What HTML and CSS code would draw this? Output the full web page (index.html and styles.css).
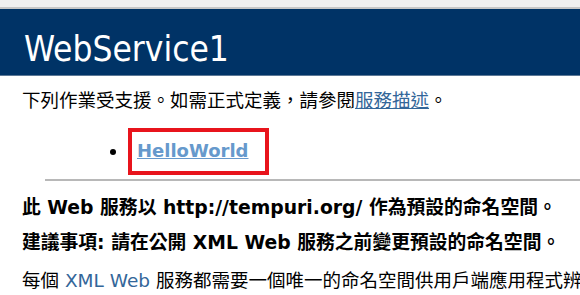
FILE: index.html
```html
<!DOCTYPE html>
<html>
<head>
<meta charset="utf-8">
<title>WebService1</title>
<link rel="stylesheet" href="styles.css">
</head>
<body>
<div class="topstrip"></div>
<div class="banner"><h1 class="title">WebService1</h1></div>
<div class="content">
  <p class="intro">下列作業受支援。如需正式定義，請參閱<a class="link" href="#">服務描述</a>。</p>
  <ul class="ops">
    <li><span class="mark"><a class="op" href="#">HelloWorld</a></span></li>
  </ul>
  <div class="rule"></div>
  <p class="strong">此 Web 服務以 http://tempuri.org/ 作為預設的命名空間。</p>
  <p class="strong">建議事項: 請在公開 XML Web 服務之前變更預設的命名空間。</p>
  <p class="plain">每個 <span class="blue">XML Web</span> 服務都需要一個唯一的命名空間供用戶端應用程式辨識</p>
</div>
</body>
</html>
```

FILE: styles.css
```css
html, body {
  margin: 0;
  padding: 0;
  background: #ffffff;
  overflow: hidden;
}
body {
  font-family: "DejaVu Sans", "Noto Sans CJK TC", sans-serif;
  font-size: 18.5px;
  color: #000000;
}
.topstrip {
  height: 7px;
  background: #f0f0f0;
  border-bottom: 2px solid #c6c6c6;
}
.banner {
  height: 66px;
  background: #003366;
  border-bottom: 1px solid #5c7896;
}
.title {
  margin: 0;
  padding: 18px 0 0 24px;
  font-family: "DejaVu Sans Condensed", "DejaVu Sans", sans-serif;
  font-stretch: condensed;
  font-size: 35px;
  line-height: 44px;
  font-weight: normal;
  color: #ffffff;
}
.content {
  padding-left: 22px;
}
.intro {
  margin: 13px 0 0;
  line-height: 24px;
  white-space: nowrap;
}
.link {
  color: #336699;
  text-decoration: underline;
}
.ops {
  margin: 15px 0 0;
  padding-left: 106px;
  line-height: 24px;
  font-size: 18px;
}
.mark {
  display: inline-block;
  border: 4px solid #e8141c;
  padding: 7px 16px 8px 5px;
}
.op {
  color: #6699cc;
  font-weight: bold;
  text-decoration: underline;
}
.rule {
  margin: 4px 0 0 23px;
  border-top: 2px solid #b8b8b8;
}
.strong {
  margin: 15px 0 0;
  line-height: 24px;
  font-size: 18.8px;
  font-weight: bold;
  white-space: nowrap;
}
.strong + .strong {
  margin-top: 11px;
}
.plain {
  margin: 14px 0 0;
  line-height: 24px;
  white-space: nowrap;
}
.blue {
  color: #336699;
}
```
